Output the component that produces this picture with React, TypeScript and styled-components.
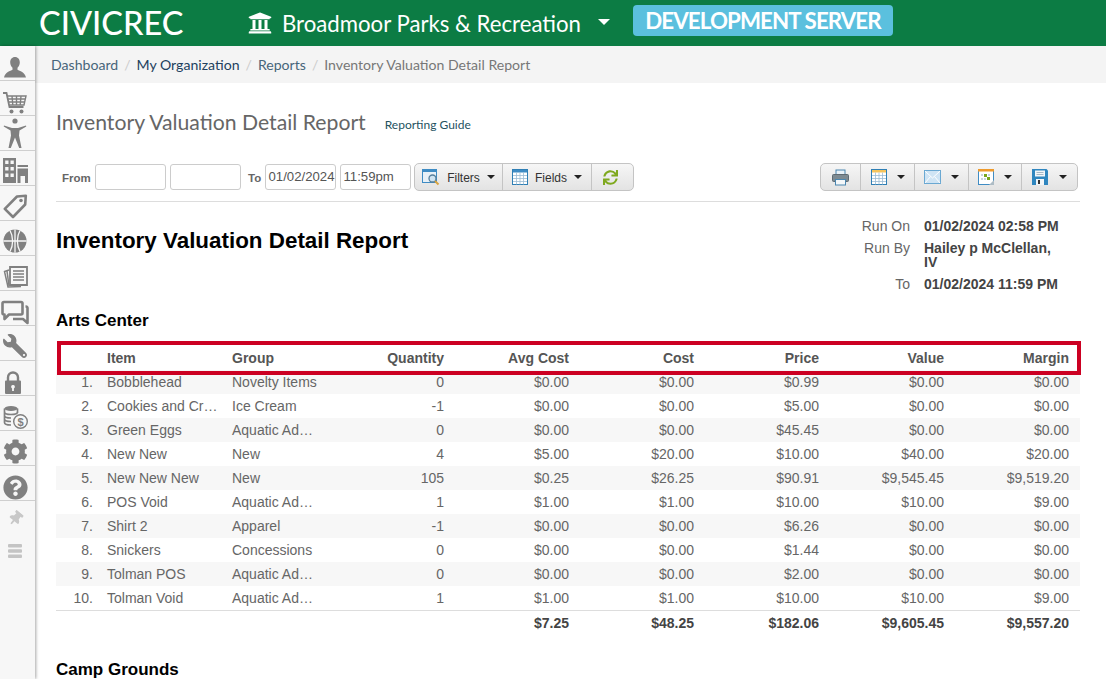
import React from 'react'
import styled, { createGlobalStyle } from 'styled-components'
import {
  FaUniversity,
  FaWrench,
  FaCog,
  FaQuestionCircle,
  FaThumbtack,
  FaSync,
} from 'react-icons/fa'

const GlobalStyle = createGlobalStyle`
  html, body {
    margin: 0;
    padding: 0;
    height: 679px;
    overflow: hidden;
    background: #fff;
    font-family: "Liberation Sans", Arial, sans-serif;
  }
  * { box-sizing: border-box; }
`

const Page = styled.div`
  width: 1106px;
  height: 679px;
  overflow: hidden;
  display: flex;
  flex-direction: column;
`

const TopBar = styled.header`
  flex: none;
  height: 46px;
  background: #0c7c44;
  display: flex;
  align-items: center;
  color: #fff;
  font-family: Lato, sans-serif;
`

const Logo = styled.div`
  width: 248px;
  padding-left: 39px;
  font-size: 32.5px;
  font-weight: 500;
  line-height: 46px;
`

const OrgButton = styled.div`
  display: flex;
  align-items: center;
  width: 385px;
  font-size: 22.2px;
  svg { font-size: 24px; margin-right: 10px; }
`

const Caret = styled.span<{ $size?: number; $color?: string }>`
  display: inline-block;
  width: 0;
  height: 0;
  border-left: ${p => p.$size ?? 4}px solid transparent;
  border-right: ${p => p.$size ?? 4}px solid transparent;
  border-top: ${p => p.$size ?? 4}px solid ${p => p.$color ?? '#222'};
`

const OrgCaret = styled(Caret)`
  margin-left: 17px;
  margin-top: -3px;
`

const DevBadge = styled.div`
  width: 260px;
  height: 31px;
  margin-top: -6px;
  background: #5bc0de;
  border-radius: 4px;
  font-size: 22.3px;
  font-weight: 700;
  line-height: 32px;
  text-align: center;
  letter-spacing: -0.9px;
`

const Body = styled.div`
  flex: 1;
  display: flex;
  min-height: 0;
`

const Sidebar = styled.nav`
  flex: none;
  width: 35px;
  background: #f7f7f7;
  box-shadow: 1px 0 3px rgba(0, 0, 0, 0.35);
  position: relative;
  z-index: 1;
`

const SideItem = styled.div<{ $plain?: boolean; $top?: number; $bottom?: number; $right?: number }>`
  height: 35px;
  display: flex;
  align-items: center;
  justify-content: center;
  color: #808080;
  padding: ${p => p.$top ?? 6}px ${p => p.$right ?? 5}px ${p => p.$bottom ?? 0}px 0;
  border-bottom: ${p => (p.$plain ? 'none' : '1px solid #cfcfcf')};
  svg { display: block; flex: none; }
`

const Main = styled.main`
  flex: 1;
  min-width: 0;
`

const Breadcrumb = styled.div`
  height: 37px;
  background: #f4f4f4;
  padding-left: 16px;
  display: flex;
  align-items: center;
  font-family: Lato, sans-serif;
  font-size: 14.1px;
  color: #777;
`

const Crumb = styled.span<{ $dark?: boolean }>`
  color: ${p => (p.$dark ? '#22415e' : '#47657a')};
`

const Slash = styled.span`
  color: #ccc;
  margin: 0 6px;
`

const Content = styled.div`
  padding: 0 26px 0 21px;
`

const TitleRow = styled.div`
  height: 81px;
  padding-bottom: 4px;
  display: flex;
  align-items: center;
  font-family: Lato, sans-serif;
`

const PageTitle = styled.h1`
  margin: 0;
  font-size: 21.2px;
  font-weight: 400;
  color: #666;
`

const GuideLink = styled.a`
  margin: 5px 0 0 19px;
  font-size: 12px;
  color: #24525f;
`

const Toolbar = styled.div`
  height: 38px;
  padding-left: 6px;
  display: flex;
  align-items: flex-start;
  border-bottom: 1px solid #ddd;
`

const FieldLabel = styled.label`
  font-size: 11.5px;
  font-weight: 700;
  color: #666;
  line-height: 28px;
  margin-right: 4px;
  width: 29px;
`

const ToLabel = styled(FieldLabel)`
  margin: 0 5px 0 3px;
  width: 12px;
`

const TextBox = styled.div`
  width: 71px;
  height: 26px;
  margin: 0 4px 0 0;
  border: 1px solid #ccc;
  border-radius: 3px;
  font-size: 13.2px;
  line-height: 24px;
  padding-left: 2.500px;
  color: #555;
  white-space: nowrap;
`

const BtnGroup = styled.div<{ $right?: boolean }>`
  display: flex;
  height: 28px;
  margin-left: ${p => (p.$right ? 'auto' : '-1px')};
  margin-right: ${p => (p.$right ? '2px' : '0')};
  margin-top: -1px;
  border: 1px solid #c4c4c4;
  border-radius: 5px;
  background: linear-gradient(#f6f6f6, #e3e3e3);
`

const Btn = styled.div<{ $width: number; $gap?: number }>`
  width: ${p => p.$width}px;
  display: flex;
  align-items: center;
  justify-content: center;
  gap: ${p => p.$gap ?? 6}px;
  font-size: 12px;
  color: #333;
  & + & { border-left: 1px solid #c4c4c4; }
`

const BtnText = styled.span`
  margin-top: 2px;
`

const ReportHead = styled.div`
  display: flex;
  justify-content: space-between;
  align-items: flex-start;
  height: 105px;
`

const ReportTitle = styled.h2`
  margin: 26px 0 0;
  font-size: 22.4px;
  font-weight: 700;
  line-height: 26px;
  color: #000;
`

const RunInfo = styled.dl`
  margin: 17px 16px 0 0;
  display: grid;
  grid-template-columns: 60px 140px;
  column-gap: 14px;
  row-gap: 8px;
  font-size: 14px;
  line-height: 14px;
`

const RunLabel = styled.dt`
  text-align: right;
  color: #666;
`

const RunValue = styled.dd`
  margin: 0;
  font-weight: 700;
  color: #444;
`

const GroupTitle = styled.h3<{ $top: number }>`
  margin: ${p => p.$top}px 0 0;
  font-size: 17px;
  font-weight: 700;
  line-height: 20px;
  color: #000;
`

const Table = styled.div`
  margin-top: 15px;
  font-size: 14px;
`

const Row = styled.div`
  display: grid;
  grid-template-columns: 51px 125px 98px repeat(6, 125px);
  height: 24px;
  line-height: 24px;
  color: #666;
`

const HeadRow = styled(Row)`
  position: relative;
  font-weight: 700;
  color: #555;
`

const Highlight = styled.div`
  position: absolute;
  top: -5px;
  bottom: -5px;
  left: 1px;
  right: -1px;
  border: 4px solid #cc0022;
  z-index: 1;
`

const BodyRow = styled(Row)`
  &:nth-child(odd) { background: #f7f7f7; }
`

const TotalRow = styled(Row)`
  border-top: 1px solid #ddd;
  height: 25px;
  font-weight: 700;
  color: #444;
`

const NumCell = styled.div`
  text-align: right;
  padding-right: 14px;
`

const TextCell = styled.div`
  white-space: nowrap;
`

const MoneyCell = styled.div`
  text-align: right;
  padding-right: 11px;
`

/* sidebar drawings */
const Person = () => (
  <svg width="24" height="22" viewBox="0 0 24 22" fill="currentColor">
    <path d="M12 0C9 0 7.2 2.4 7.2 5.4c0 2.2 1 4.2 2.3 5.4v1.9C7.4 13.8 2 15 1 20.5h22c-1-5.5-6.4-6.7-8.5-7.8v-1.9c1.3-1.2 2.3-3.2 2.3-5.4C16.8 2.4 15 0 12 0z" />
  </svg>
)

const Cart = () => (
  <svg width="26" height="24" viewBox="0 0 26 24" fill="none" stroke="currentColor" strokeWidth="1.4">
    <path d="M1 2h3.500l3 14h14" strokeWidth="1.800" />
    <path d="M5 5h19l-2 9H7.500M10 5l.8 9M14.500 5v9M19 5l-.8 9M5.700 8h17.500M6.300 11h16.300" />
    <circle cx="9.500" cy="20.500" r="2" fill="currentColor" stroke="none" />
    <circle cx="19.500" cy="20.500" r="2" fill="currentColor" stroke="none" />
  </svg>
)

const Figure = () => (
  <svg width="24" height="32" viewBox="0 0 24 32" fill="currentColor">
    <circle cx="12" cy="4" r="2.600" />
    <path d="M1 8.500l8 2.500h6l8-2.500.3 1-6.800 4-.5 5L18.500 31h-2.300L12 20.500 7.800 31H5.500L8 18.500l-.5-5-6.800-4z" />
  </svg>
)

const Buildings = () => (
  <svg width="25" height="25" viewBox="0 0 25 25" fill="currentColor">
    <path fillRule="evenodd" d="M0 0h13v25H0zM2.200 2.500v3.500h3.300V2.500zm5.300 0v3.500h3.300V2.500zM2.200 9v3.500h3.300V9zm5.300 0v3.500h3.300V9zM2.200 15.500V19h3.300v-3.500zm5.300 0V19h3.300v-3.500z" />
    <path d="M14.500 7H25v2H14.500z" />
    <path d="M14.500 10.500H25V25h-3v-7h-4.500v7h-3z" />
  </svg>
)

const Tag = () => (
  <svg width="25" height="25" viewBox="0 0 25 25" fill="none" stroke="currentColor" strokeWidth="2.600" strokeLinejoin="round">
    <path d="M14 2.500l8.800-.8-.6 8.800L10 23 1.800 14.800z" />
    <circle cx="18" cy="6.500" r="1.800" fill="currentColor" stroke="none" />
  </svg>
)

const Ball = () => (
  <svg width="24" height="24" viewBox="0 0 24 24" fill="none" stroke="#f7f7f7" strokeWidth="1.300">
    <circle cx="12" cy="12" r="11.500" fill="currentColor" stroke="none" />
    <path d="M12 .5v23M.5 12h23M7 1.500c3.500 6 3.500 15 0 21M17 1.500c-3.500 6-3.500 15 0 21" />
  </svg>
)

const Papers = () => (
  <svg width="25" height="24" viewBox="0 0 25 24" fill="none" stroke="currentColor" strokeWidth="1.500">
    <path d="M7 2h17v18H7z" strokeWidth="1.800" />
    <path d="M10 6h11M10 9h11M10 12h11M10 15h11" />
    <path d="M6 5L1.500 6.500 5 22l13-.5" />
    <path d="M4 6l2 15" />
  </svg>
)

const Bubbles = () => (
  <svg width="28" height="25" viewBox="0 0 28 25" fill="none" stroke="currentColor" strokeWidth="2.600" strokeLinejoin="round">
    <path d="M3 2h17a1.500 1.500 0 0 1 1.500 1.500V13a1.500 1.500 0 0 1-1.500 1.500H8L3.500 19v-4.500H3A1.500 1.500 0 0 1 1.500 13V3.500A1.500 1.500 0 0 1 3 2z" />
    <path d="M24.500 6.500h.5A1.500 1.500 0 0 1 26.500 8v15L22 19H12" />
  </svg>
)

const Lock = () => (
  <svg width="16" height="23" viewBox="0 0 16 23" fill="currentColor">
    <path d="M3 10V6.500a5 5 0 0 1 10 0V10" fill="none" stroke="currentColor" strokeWidth="2.400" />
    <path fillRule="evenodd" d="M1 9.500h14a1 1 0 0 1 1 1V22a1 1 0 0 1-1 1H1a1 1 0 0 1-1-1V10.500a1 1 0 0 1 1-1zM8 14a1.800 1.800 0 0 0-.9 3.400V20h1.800v-2.600A1.800 1.800 0 0 0 8 14z" />
  </svg>
)

const Coins = () => (
  <svg width="25" height="25" viewBox="0 0 25 25" fill="none" stroke="currentColor" strokeWidth="1.400">
    <ellipse cx="8" cy="3.500" rx="6.500" ry="2.500" fill="currentColor" stroke="none" />
    <path d="M1.500 7c0 1.400 3 2.500 6.500 2.500s6.500-1 6.500-2.500M1.500 3.500v14c0 1.400 3 2.500 6.500 2.500M14.500 3.500V8M1.500 10.500c0 1.400 3 2.500 6.500 2.500M1.500 14c0 1.400 3 2.500 6.500 2.500" strokeWidth="1.700" />
    <circle cx="17.500" cy="16.500" r="6.800" fill="#f7f7f7" />
    <text x="17.500" y="20.500" fontSize="11" fontWeight="700" textAnchor="middle" fill="currentColor" stroke="none" fontFamily="Liberation Sans">$</text>
  </svg>
)

const Bars = () => (
  <svg width="16" height="16" viewBox="0 0 16 16" fill="#c4c4c4">
    <rect x="1" y="1" width="14" height="3.600" rx="1" />
    <rect x="1" y="6.200" width="14" height="3.600" rx="1" />
    <rect x="1" y="11.400" width="14" height="3.600" rx="1" />
  </svg>
)

const MirroredWrench = styled(FaWrench)`
  transform: scaleX(-1);
`

const TiltedPin = styled(FaThumbtack)`
  transform: rotate(40deg);
  color: #c8c8c8;
`

/* toolbar drawings */
const FilterIcon = () => (
  <svg width="18" height="18" viewBox="0 0 18 18">
    <rect x=".5" y="1.500" width="14" height="13" fill="#e8f1f8" stroke="#3f8cc4" />
    <rect x=".5" y="1.500" width="14" height="2.500" fill="#3f8cc4" />
    <circle cx="10.500" cy="10.500" r="3.500" fill="#cfe4f2" stroke="#557f9c" strokeWidth="1.300" />
    <path d="M13 13l3.500 3.500" stroke="#d9a441" strokeWidth="2" />
  </svg>
)

const GridIcon = ({ head = '#3f8cc4' }: { head?: string }) => (
  <svg width="16" height="16" viewBox="0 0 16 16">
    <rect x=".5" y=".5" width="15" height="15" fill="#fff" stroke="#2f7fb5" />
    <rect x="1" y="1" width="14" height="2.500" fill={head} />
    <path d="M4.500 3.500v12M8 3.500v12M11.500 3.500v12M1 6.500h14M1 9.500h14M1 12.500h14" stroke="#9dbdd4" strokeWidth=".8" />
  </svg>
)

const PrintIcon = () => (
  <svg width="17" height="17" viewBox="0 0 17 17">
    <rect x="4" y="1" width="9" height="5" fill="#e8f1f8" stroke="#4a86b0" />
    <rect x=".5" y="5.500" width="16" height="7" rx="1" fill="#7d8a92" stroke="#5f6a72" />
    <rect x="3.500" y="10.500" width="10" height="5.500" fill="#f4f7f9" stroke="#4a86b0" />
  </svg>
)

const MailIcon = () => (
  <svg width="17" height="14" viewBox="0 0 17 14">
    <rect x=".5" y=".5" width="16" height="13" fill="#cfe4f4" stroke="#6aa8d2" />
    <path d="M1 1l7.500 7L16 1M1 13l5.500-6.500M16 13l-5.500-6.500" fill="none" stroke="#fff" strokeWidth="1" />
  </svg>
)

const CalIcon = () => (
  <svg width="16" height="16" viewBox="0 0 16 16">
    <rect x=".5" y=".5" width="15" height="15" fill="#fff" stroke="#3f8cc4" />
    <rect x="0" y="0" width="16" height="2.500" fill="#ef9b2d" />
    <path d="M6 5h3v3H6zM9 8h3v3H9z" fill="#7aa81e" />
    <path d="M3 5h2v2H3zM3 9h2v2H3zM6 9h2v2H6zM10 5h2v2h-2z" fill="#c9d6de" />
    <path d="M16 11l-5 5h5z" fill="#aebcc5" />
  </svg>
)

const SaveIcon = () => (
  <svg width="16" height="16" viewBox="0 0 16 16">
    <path d="M0 0h14.500L16 1.500V16H0z" fill="#2f86bf" />
    <rect x="3" y="1.500" width="10" height="6" fill="#f2f6f9" />
    <path d="M4.500 3.500h7M4.500 5.500h7" stroke="#8fa7b7" strokeWidth=".8" />
    <rect x="4" y="10" width="8" height="6" fill="#f2f6f9" />
    <rect x="6" y="11" width="2" height="4" fill="#333" />
  </svg>
)

const RefreshIcon = styled(FaSync)`
  color: #7fa91f;
  font-size: 15px;
  margin-right: 4px;
`

type Item = { n: number; item: string; group: string; qty: string; avg: string; cost: string; price: string; value: string; margin: string }

const items: Item[] = [
  { n: 1, item: 'Bobblehead', group: 'Novelty Items', qty: '0', avg: '$0.00', cost: '$0.00', price: '$0.99', value: '$0.00', margin: '$0.00' },
  { n: 2, item: 'Cookies and Cr…', group: 'Ice Cream', qty: '-1', avg: '$0.00', cost: '$0.00', price: '$5.00', value: '$0.00', margin: '$0.00' },
  { n: 3, item: 'Green Eggs', group: 'Aquatic Ad…', qty: '0', avg: '$0.00', cost: '$0.00', price: '$45.45', value: '$0.00', margin: '$0.00' },
  { n: 4, item: 'New New', group: 'New', qty: '4', avg: '$5.00', cost: '$20.00', price: '$10.00', value: '$40.00', margin: '$20.00' },
  { n: 5, item: 'New New New', group: 'New', qty: '105', avg: '$0.25', cost: '$26.25', price: '$90.91', value: '$9,545.45', margin: '$9,519.20' },
  { n: 6, item: 'POS Void', group: 'Aquatic Ad…', qty: '1', avg: '$1.00', cost: '$1.00', price: '$10.00', value: '$10.00', margin: '$9.00' },
  { n: 7, item: 'Shirt 2', group: 'Apparel', qty: '-1', avg: '$0.00', cost: '$0.00', price: '$6.26', value: '$0.00', margin: '$0.00' },
  { n: 8, item: 'Snickers', group: 'Concessions', qty: '0', avg: '$0.00', cost: '$0.00', price: '$1.44', value: '$0.00', margin: '$0.00' },
  { n: 9, item: 'Tolman POS', group: 'Aquatic Ad…', qty: '0', avg: '$0.00', cost: '$0.00', price: '$2.00', value: '$0.00', margin: '$0.00' },
  { n: 10, item: 'Tolman Void', group: 'Aquatic Ad…', qty: '1', avg: '$1.00', cost: '$1.00', price: '$10.00', value: '$10.00', margin: '$9.00' },
]

export default function App() {
  return (
    <Page>
      <GlobalStyle />
      <TopBar>
        <Logo>CIVICREC</Logo>
        <OrgButton>
          <FaUniversity />
          Broadmoor Parks &amp; Recreation
          <OrgCaret $size={6} $color="#fff" />
        </OrgButton>
        <DevBadge>DEVELOPMENT SERVER</DevBadge>
      </TopBar>
      <Body>
        <Sidebar>
          <SideItem $top={10}><Person /></SideItem>
          <SideItem $top={10}><Cart /></SideItem>
          <SideItem $top={0}><Figure /></SideItem>
          <SideItem $top={4}><Buildings /></SideItem>
          <SideItem><Tag /></SideItem>
          <SideItem><Ball /></SideItem>
          <SideItem $top={8}><Papers /></SideItem>
          <SideItem $top={8}><Bubbles /></SideItem>
          <SideItem><MirroredWrench size={24} /></SideItem>
          <SideItem $top={8} $right={10}><Lock /></SideItem>
          <SideItem $top={8}><Coins /></SideItem>
          <SideItem><FaCog size={25} /></SideItem>
          <SideItem $top={8}><FaQuestionCircle size={25} /></SideItem>
          <SideItem $plain $top={0}><TiltedPin size={15} /></SideItem>
          <SideItem $plain $top={0} $bottom={6}><Bars /></SideItem>
        </Sidebar>
        <Main>
          <Breadcrumb>
            <Crumb>Dashboard</Crumb>
            <Slash>/</Slash>
            <Crumb $dark>My Organization</Crumb>
            <Slash>/</Slash>
            <Crumb>Reports</Crumb>
            <Slash>/</Slash>
            Inventory Valuation Detail Report
          </Breadcrumb>
          <Content>
            <TitleRow>
              <PageTitle>Inventory Valuation Detail Report</PageTitle>
              <GuideLink>Reporting Guide</GuideLink>
            </TitleRow>
            <Toolbar>
              <FieldLabel>From</FieldLabel>
              <TextBox />
              <TextBox />
              <ToLabel>To</ToLabel>
              <TextBox>01/02/2024</TextBox>
              <TextBox>11:59pm</TextBox>
              <BtnGroup>
                <Btn $width={87} $gap={7}>
                  <FilterIcon />
                  <BtnText>Filters</BtnText>
                  <Caret />
                </Btn>
                <Btn $width={89} $gap={7}>
                  <GridIcon />
                  <BtnText>Fields</BtnText>
                  <Caret />
                </Btn>
                <Btn $width={42}>
                  <RefreshIcon />
                </Btn>
              </BtnGroup>
              <BtnGroup $right>
                <Btn $width={39}>
                  <PrintIcon />
                </Btn>
                <Btn $width={54} $gap={10}>
                  <GridIcon head="#f5c45c" />
                  <Caret />
                </Btn>
                <Btn $width={54} $gap={10}>
                  <MailIcon />
                  <Caret />
                </Btn>
                <Btn $width={53} $gap={10}>
                  <CalIcon />
                  <Caret />
                </Btn>
                <Btn $width={56} $gap={11}>
                  <SaveIcon />
                  <Caret />
                </Btn>
              </BtnGroup>
            </Toolbar>
            <ReportHead>
              <ReportTitle>Inventory Valuation Detail Report</ReportTitle>
              <RunInfo>
                <RunLabel>Run On</RunLabel>
                <RunValue>01/02/2024 02:58 PM</RunValue>
                <RunLabel>Run By</RunLabel>
                <RunValue>Hailey p McClellan, IV</RunValue>
                <RunLabel>To</RunLabel>
                <RunValue>01/02/2024 11:59 PM</RunValue>
              </RunInfo>
            </ReportHead>
            <GroupTitle $top={4}>Arts Center</GroupTitle>
            <Table>
              <HeadRow>
                <Highlight />
                <NumCell />
                <TextCell>Item</TextCell>
                <TextCell>Group</TextCell>
                <MoneyCell>Quantity</MoneyCell>
                <MoneyCell>Avg Cost</MoneyCell>
                <MoneyCell>Cost</MoneyCell>
                <MoneyCell>Price</MoneyCell>
                <MoneyCell>Value</MoneyCell>
                <MoneyCell>Margin</MoneyCell>
              </HeadRow>
              <div>
                {items.map(r => (
                  <BodyRow key={r.n}>
                    <NumCell>{r.n}.</NumCell>
                    <TextCell>{r.item}</TextCell>
                    <TextCell>{r.group}</TextCell>
                    <MoneyCell>{r.qty}</MoneyCell>
                    <MoneyCell>{r.avg}</MoneyCell>
                    <MoneyCell>{r.cost}</MoneyCell>
                    <MoneyCell>{r.price}</MoneyCell>
                    <MoneyCell>{r.value}</MoneyCell>
                    <MoneyCell>{r.margin}</MoneyCell>
                  </BodyRow>
                ))}
              </div>
              <TotalRow>
                <NumCell />
                <TextCell />
                <TextCell />
                <MoneyCell />
                <MoneyCell>$7.25</MoneyCell>
                <MoneyCell>$48.25</MoneyCell>
                <MoneyCell>$182.06</MoneyCell>
                <MoneyCell>$9,605.45</MoneyCell>
                <MoneyCell>$9,557.20</MoneyCell>
              </TotalRow>
            </Table>
            <GroupTitle $top={25}>Camp Grounds</GroupTitle>
          </Content>
        </Main>
      </Body>
    </Page>
  )
}
